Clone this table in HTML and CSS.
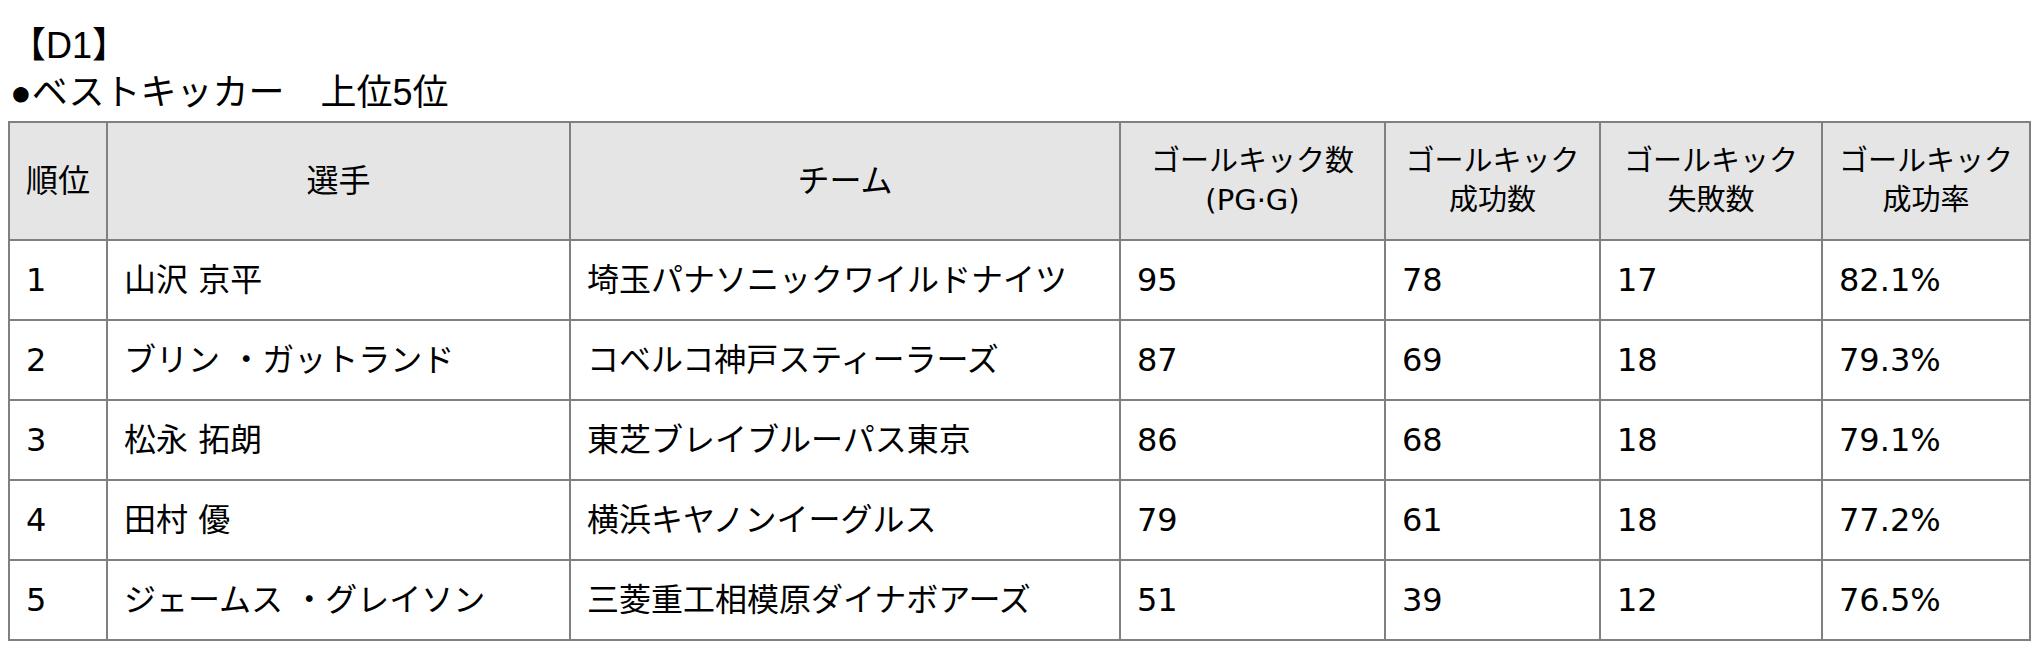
FILE: index.html
```html
<!DOCTYPE html>
<html lang="ja">
<head>
<meta charset="utf-8">
<title>ベストキッカー</title>
<link rel="stylesheet" href="styles.css">
</head>
<body>
<div class="page">
  <div class="title">
    <div class="title-line">【D1】</div>
    <div class="title-line">●ベストキッカー　上位5位</div>
  </div>
  <table class="rank">
    <colgroup>
      <col class="c1"><col class="c2"><col class="c3"><col class="c4"><col class="c5"><col class="c6"><col class="c7">
    </colgroup>
    <thead>
      <tr>
        <th class="single">順位</th>
        <th class="single">選手</th>
        <th class="single">チーム</th>
        <th>ゴールキック数<br>(PG·G)</th>
        <th>ゴールキック<br>成功数</th>
        <th>ゴールキック<br>失敗数</th>
        <th>ゴールキック<br>成功率</th>
      </tr>
    </thead>
    <tbody>
      <tr><td>1</td><td>山沢 京平</td><td>埼玉パナソニックワイルドナイツ</td><td>95</td><td>78</td><td>17</td><td>82.1%</td></tr>
      <tr><td>2</td><td>ブリン ・ガットランド</td><td>コベルコ神戸スティーラーズ</td><td>87</td><td>69</td><td>18</td><td>79.3%</td></tr>
      <tr><td>3</td><td>松永 拓朗</td><td>東芝ブレイブルーパス東京</td><td>86</td><td>68</td><td>18</td><td>79.1%</td></tr>
      <tr><td>4</td><td>田村 優</td><td>横浜キヤノンイーグルス</td><td>79</td><td>61</td><td>18</td><td>77.2%</td></tr>
      <tr><td>5</td><td>ジェームス ・グレイソン</td><td>三菱重工相模原ダイナボアーズ</td><td>51</td><td>39</td><td>12</td><td>76.5%</td></tr>
    </tbody>
  </table>
</div>
</body>
</html>
```

FILE: styles.css
```css
html, body {
  margin: 0;
  padding: 0;
  background: #ffffff;
}

.page {
  padding: 22px 0 0 8px;
}

.title {
  font-family: "Liberation Sans", "Noto Sans CJK JP", sans-serif;
  font-size: 36px;
  line-height: 47px;
  color: #000;
  padding-left: 2px;
  margin-bottom: 5px;
}

.rank {
  border-collapse: collapse;
  table-layout: fixed;
  width: 2021px;
  font-family: "DejaVu Sans", "Noto Sans CJK JP", sans-serif;
  color: #000;
}

.c1 { width: 98px; }
.c2 { width: 463px; }
.c3 { width: 550px; }
.c4 { width: 265px; }
.c5 { width: 215px; }
.c6 { width: 222px; }
.c7 { width: 208px; }

.rank th,
.rank td {
  border: 2px solid #808080;
  padding: 0 0 0 16px;
  vertical-align: middle;
  white-space: nowrap;
}

.rank th {
  background: #e5e5e5;
  font-weight: normal;
  font-size: 29px;
  line-height: 39px;
  height: 116px;
  text-align: center;
  padding: 0;
}

.rank th.single {
  font-size: 32px;
}

.rank td {
  font-size: 32px;
  line-height: 40px;
  height: 78px;
  text-align: left;
}
```
